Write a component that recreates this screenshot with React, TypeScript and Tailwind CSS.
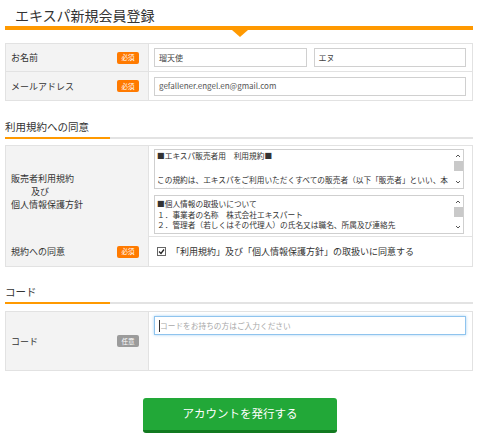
import React from 'react';

const Badge: React.FC<{ text: string; grey?: boolean }> = ({ text, grey }) => (
  <span
    className={`inline-flex h-[12px] w-[22px] items-center justify-center rounded-[2px] text-[6.5px] leading-none text-white ${
      grey ? 'bg-[#9b9b9b]' : 'bg-[#ff7a00]'
    }`}
  >
    {text}
  </span>
);

const Label: React.FC<{ children: React.ReactNode; badge?: React.ReactNode }> = ({ children, badge }) => (
  <div className="flex items-center justify-between border-r border-[#e2e2e2] bg-[#f3f3f3] pl-[5px] pr-[9px] text-[9px] leading-[13px] text-[#333]">
    <div>{children}</div>
    {badge}
  </div>
);

const SectionHeading: React.FC<{ title: string; className?: string }> = ({ title, className }) => (
  <div className={className}>
    <div className="text-[10.5px] leading-[20px] text-[#333]">{title}</div>
    <div className="flex">
      <div className="h-[2px] w-[105px] bg-[#ff9900]" />
      <div className="h-[2px] flex-1 bg-[#e3e3e3]" />
    </div>
  </div>
);

// fake textarea scrollbar
const ScrollBar: React.FC = () => (
  <div className="flex w-[10px] flex-col items-center">
    <svg width="6" height="10" viewBox="0 0 6 10" className="mt-[1px]">
      <path d="M1 6 L3 4 L5 6" fill="none" stroke="#555" strokeWidth="1" />
    </svg>
    <div className="h-[10px] w-[9px] bg-[#c9c9c9]" />
    <div className="flex-1" />
    <svg width="6" height="10" viewBox="0 0 6 10" className="mb-[1px]">
      <path d="M1 4 L3 6 L5 4" fill="none" stroke="#555" strokeWidth="1" />
    </svg>
  </div>
);

const TextBox: React.FC<{ lines: string[]; height: string; leading: string; pad: string }> = ({
  lines,
  height,
  leading,
  pad,
}) => (
  <div className={`flex overflow-hidden border border-[#cfcfcf] bg-white ${height}`}>
    <div className={`flex-1 overflow-hidden pl-[2px] ${pad} text-[7.7px] ${leading} text-[#333]`}>
      {lines.map((l, i) => (
        <div key={i} className="whitespace-nowrap">
          {l || '\u00a0'}
        </div>
      ))}
    </div>
    <ScrollBar />
  </div>
);

export default function App() {
  return (
    <div className="w-[480px] bg-white pb-[8px] font-['Noto_Sans_CJK_JP','Noto_Sans',sans-serif] text-[#333]">
      {/* page title */}
      <div className="ml-[5px] mr-[7px] pt-[4px]">
        <h1 className="pl-[10px] text-[14px] leading-[22px] text-[#333]">エキスパ新規会員登録</h1>
        <div className="relative h-[4px] bg-[#ff9900]">
          <div className="absolute left-[227px] top-full h-0 w-0 border-l-[8px] border-r-[8px] border-t-[7px] border-l-transparent border-r-transparent border-t-[#ff9900]" />
        </div>
      </div>

      {/* name / mail */}
      <div className="ml-[5px] mr-[7px] mt-[13px] border border-[#e2e2e2]">
        <div className="grid h-[28px] grid-cols-[143px_1fr] border-b border-[#e2e2e2]">
          <Label badge={<Badge text="必須" />}>お名前</Label>
          <div className="flex items-center gap-[7px] pl-[5px] pr-[6px]">
            <div className="flex h-[19px] flex-1 items-center border border-[#d0d0d0] px-[4px] text-[8px] text-[#444]">
              瑠天使
            </div>
            <div className="flex h-[19px] flex-1 items-center border border-[#d0d0d0] px-[4px] text-[8px] text-[#444]">
              エヌ
            </div>
          </div>
        </div>
        <div className="grid h-[28px] grid-cols-[143px_1fr]">
          <Label badge={<Badge text="必須" />}>メールアドレス</Label>
          <div className="flex items-center pl-[5px] pr-[6px]">
            <div className="flex h-[19px] flex-1 items-center border border-[#d0d0d0] px-[4px] text-[8px] text-[#555]">
              gefallener.engel.en@gmail.com
            </div>
          </div>
        </div>
      </div>

      {/* terms */}
      <SectionHeading title="利用規約への同意" className="ml-[5px] mr-[7px] mt-[16px]" />
      <div className="ml-[5px] mr-[7px] mt-[6px] border border-[#e2e2e2]">
        <div className="grid h-[91px] grid-cols-[143px_1fr] border-b border-[#e2e2e2]">
          <Label>
            <div>販売者利用規約</div>
            <div className="pl-[20px]">及び</div>
            <div>個人情報保護方針</div>
          </Label>
          <div className="flex flex-col gap-[6px] pb-[3px] pl-[5px] pr-[8px] pt-[3px]">
            <TextBox
              height="h-[40px]"
              leading="leading-[12px]"
              pad="pt-0"
              lines={[
                '■エキスパ販売者用　利用規約■',
                '',
                'この規約は、エキスパをご利用いただくすべての販売者（以下「販売者」といい、本',
                '規約第２条に規定する登録申請者を含みます。）に適用されます。',
              ]}
            />
            <TextBox
              height="h-[39px]"
              leading="leading-[10.5px]"
              pad="pt-[3px]"
              lines={[
                '■個人情報の取扱いについて',
                '１．事業者の名称　株式会社エキスパート',
                '２．管理者（若しくはその代理人）の氏名又は職名、所属及び連絡先',
              ]}
            />
          </div>
        </div>
        <div className="grid h-[29px] grid-cols-[143px_1fr]">
          <Label badge={<Badge text="必須" />}>規約への同意</Label>
          <div className="flex items-center pl-[8px] text-[9px] text-[#333]">
            <span className="flex h-[9px] w-[9px] items-center justify-center border border-[#666] bg-white">
              <svg width="7" height="7" viewBox="0 0 7 7">
                <path d="M1 3.5 L3 5.5 L6 1.5" fill="none" stroke="#222" strokeWidth="1.3" />
              </svg>
            </span>
            <span className="ml-[5px]">「利用規約」及び「個人情報保護方針」の取扱いに同意する</span>
          </div>
        </div>
      </div>

      {/* code */}
      <SectionHeading title="コード" className="ml-[5px] mr-[7px] mt-[15px]" />
      <div className="ml-[5px] mr-[7px] mt-[7px] border border-[#e2e2e2]">
        <div className="grid h-[58px] grid-cols-[143px_1fr]">
          <Label badge={<Badge text="任意" grey />}>コード</Label>
          <div className="pl-[5px] pr-[6px] pt-[4px]">
            <div className="relative flex h-[19px] items-center border border-[#8fc4ee] px-[5px] text-[7.7px] text-[#a8a8a8] shadow-[0_0_3px_#a9d3f3]">
              <span className="absolute left-[4px] top-[3px] h-[12px] w-px bg-[#333]" />
              コードをお持ちの方はご入力ください
            </div>
          </div>
        </div>
      </div>

      {/* submit */}
      <div className="mt-[27px] flex justify-center">
        <button className="h-[35px] w-[194px] rounded-[3px] border-b-[3px] border-[#127a20] bg-[#22a838] text-[11.5px] text-white">
          アカウントを発行する
        </button>
      </div>
    </div>
  );
}
